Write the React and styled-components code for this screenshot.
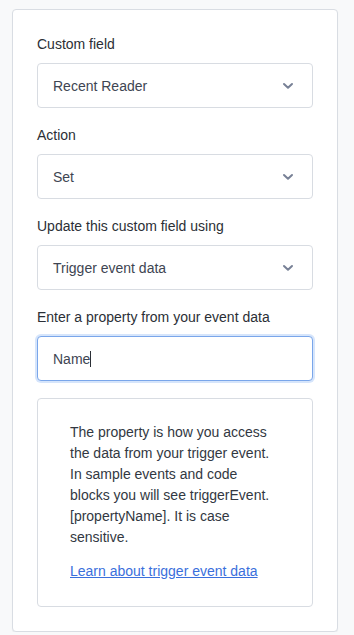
import React from "react";
import styled, { createGlobalStyle } from "styled-components";

const Global = createGlobalStyle`
  html, body { margin: 0; padding: 0; background: #f8f9fa; }
  body { font-family: "Liberation Sans", Arial, sans-serif; font-size: 14px; }
  * { box-sizing: border-box; }
`;

const Page = styled.div`
  padding: 9px 16px 0 12px;
`;

const Card = styled.div`
  width: 326px;
  background: #ffffff;
  border: 1px solid #d9dde3;
  border-radius: 4px;
  padding: 24px;
  display: flex;
  flex-direction: column;
  gap: 17px;
  box-shadow: 0 1px 1px rgba(40, 50, 70, 0.06);
`;

const Field = styled.div`
  display: flex;
  flex-direction: column;
`;

const Label = styled.label`
  font-size: 14px;
  line-height: 20px;
  color: #2b2f36;
  margin-bottom: 9px;
`;

const SelectBox = styled.div`
  height: 45px;
  border: 1px solid #d8dce2;
  border-radius: 4px;
  background: #fff;
  display: flex;
  align-items: center;
  justify-content: space-between;
  padding: 0 18px 0 15px;
  font-size: 14px;
  color: #3e4552;
`;

const Chevron = styled.svg`
  width: 12px;
  height: 8px;
  display: block;
`;

const Input = styled.div`
  height: 45px;
  border: 1px solid #7aa6ea;
  border-radius: 4px;
  background: #fff;
  box-shadow: 0 0 0 2px #d6e5fb;
  display: flex;
  align-items: center;
  padding: 0 15px;
  font-size: 14px;
  color: #3e4552;
`;

const Caret = styled.span`
  display: inline-block;
  width: 1px;
  height: 16px;
  background: #2b2f36;
`;

const InfoBox = styled.div`
  border: 1px solid #d8dce2;
  border-radius: 4px;
  padding: 23px 32px 24px 32px;
`;

const InfoText = styled.p`
  margin: 0;
  font-size: 14px;
  line-height: 21px;
  color: #323842;
`;

const Link = styled.a`
  display: block;
  margin-top: 13px;
  font-size: 14px;
  line-height: 21px;
  color: #3a6fdc;
  text-decoration: underline;
`;

const Select = ({ value }) => (
  <SelectBox>
    <span>{value}</span>
    <Chevron viewBox="0 0 12 8">
      <polyline points="2,2 6,5.8 10,2" fill="none" stroke="#788196" strokeWidth="2" strokeLinecap="round" strokeLinejoin="round" />
    </Chevron>
  </SelectBox>
);

export default function App() {
  return (
    <>
      <Global />
      <Page>
        <Card>
          <Field>
            <Label>Custom field</Label>
            <Select value="Recent Reader" />
          </Field>
          <Field>
            <Label>Action</Label>
            <Select value="Set" />
          </Field>
          <Field>
            <Label>Update this custom field using</Label>
            <Select value="Trigger event data" />
          </Field>
          <Field>
            <Label>Enter a property from your event data</Label>
            <Input>
              Name<Caret />
            </Input>
          </Field>
          <InfoBox>
            <InfoText>
              The property is how you access the data from your trigger event. In sample events and code blocks you will see triggerEvent.[propertyName]. It is case sensitive.
            </InfoText>
            <Link href="#">Learn about trigger event data</Link>
          </InfoBox>
        </Card>
      </Page>
    </>
  );
}
